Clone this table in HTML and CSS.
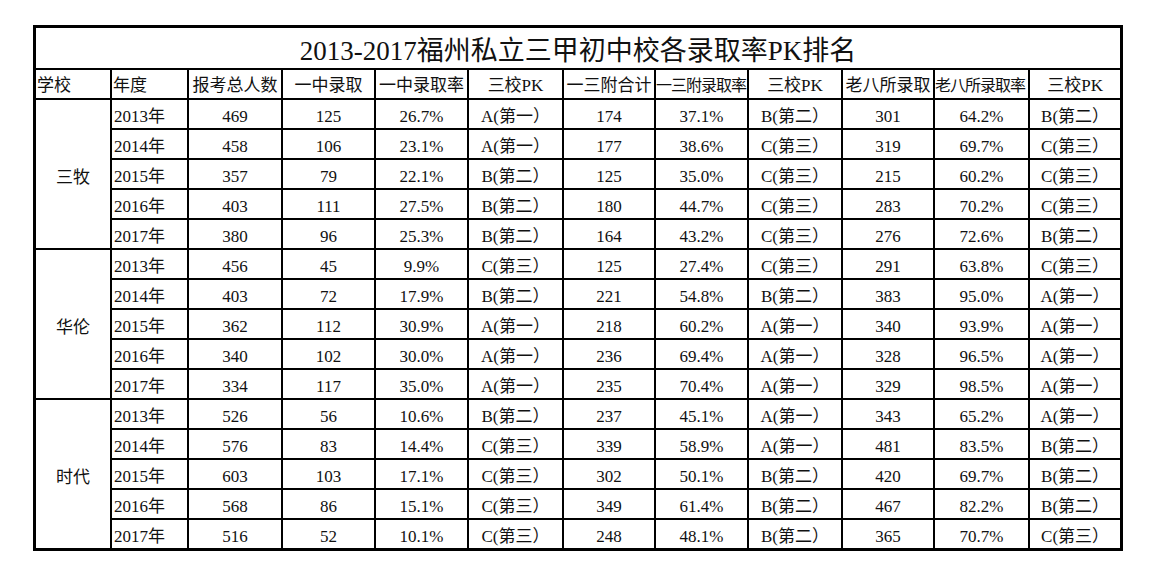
FILE: index.html
```html
<!DOCTYPE html>
<html lang="zh-CN">
<head>
<meta charset="utf-8">
<title>2013-2017福州私立三甲初中校各录取率PK排名</title>
<link rel="stylesheet" href="styles.css">
</head>
<body>
<table class="sheet">
  <colgroup>
    <col class="c1"><col class="c2"><col class="c3"><col class="c4"><col class="c5"><col class="c6">
    <col class="c7"><col class="c8"><col class="c9"><col class="c10"><col class="c11"><col class="c12">
  </colgroup>
  <tbody>
    <tr class="title-row"><td colspan="12" class="title">2013-2017福州私立三甲初中校各录取率PK排名</td></tr>
    <tr class="head-row">
      <td class="left">学校</td><td class="left">年度</td><td>报考总人数</td><td>一中录取</td><td>一中录取率</td><td>三校PK</td>
      <td>一三附合计</td><td class="tight">一三附录取率</td><td>三校PK</td><td>老八所录取</td><td class="tight">老八所录取率</td><td>三校PK</td>
    </tr>
    <tr><td class="school" rowspan="5">三牧</td><td class="left">2013年</td><td>469</td><td>125</td><td>26.7%</td><td>A(第一）</td><td>174</td><td>37.1%</td><td>B(第二）</td><td>301</td><td>64.2%</td><td>B(第二）</td></tr>
    <tr><td class="left">2014年</td><td>458</td><td>106</td><td>23.1%</td><td>A(第一）</td><td>177</td><td>38.6%</td><td>C(第三）</td><td>319</td><td>69.7%</td><td>C(第三）</td></tr>
    <tr><td class="left">2015年</td><td>357</td><td>79</td><td>22.1%</td><td>B(第二）</td><td>125</td><td>35.0%</td><td>C(第三）</td><td>215</td><td>60.2%</td><td>C(第三）</td></tr>
    <tr><td class="left">2016年</td><td>403</td><td>111</td><td>27.5%</td><td>B(第二）</td><td>180</td><td>44.7%</td><td>C(第三）</td><td>283</td><td>70.2%</td><td>C(第三）</td></tr>
    <tr><td class="left">2017年</td><td>380</td><td>96</td><td>25.3%</td><td>B(第二）</td><td>164</td><td>43.2%</td><td>C(第三）</td><td>276</td><td>72.6%</td><td>B(第二）</td></tr>
    <tr><td class="school" rowspan="5">华伦</td><td class="left">2013年</td><td>456</td><td>45</td><td>9.9%</td><td>C(第三）</td><td>125</td><td>27.4%</td><td>C(第三）</td><td>291</td><td>63.8%</td><td>C(第三）</td></tr>
    <tr><td class="left">2014年</td><td>403</td><td>72</td><td>17.9%</td><td>B(第二）</td><td>221</td><td>54.8%</td><td>B(第二）</td><td>383</td><td>95.0%</td><td>A(第一）</td></tr>
    <tr><td class="left">2015年</td><td>362</td><td>112</td><td>30.9%</td><td>A(第一）</td><td>218</td><td>60.2%</td><td>A(第一）</td><td>340</td><td>93.9%</td><td>A(第一）</td></tr>
    <tr><td class="left">2016年</td><td>340</td><td>102</td><td>30.0%</td><td>A(第一）</td><td>236</td><td>69.4%</td><td>A(第一）</td><td>328</td><td>96.5%</td><td>A(第一）</td></tr>
    <tr><td class="left">2017年</td><td>334</td><td>117</td><td>35.0%</td><td>A(第一）</td><td>235</td><td>70.4%</td><td>A(第一）</td><td>329</td><td>98.5%</td><td>A(第一）</td></tr>
    <tr><td class="school" rowspan="5">时代</td><td class="left">2013年</td><td>526</td><td>56</td><td>10.6%</td><td>B(第二）</td><td>237</td><td>45.1%</td><td>A(第一）</td><td>343</td><td>65.2%</td><td>A(第一）</td></tr>
    <tr><td class="left">2014年</td><td>576</td><td>83</td><td>14.4%</td><td>C(第三）</td><td>339</td><td>58.9%</td><td>A(第一）</td><td>481</td><td>83.5%</td><td>B(第二）</td></tr>
    <tr><td class="left">2015年</td><td>603</td><td>103</td><td>17.1%</td><td>C(第三）</td><td>302</td><td>50.1%</td><td>B(第二）</td><td>420</td><td>69.7%</td><td>B(第二）</td></tr>
    <tr><td class="left">2016年</td><td>568</td><td>86</td><td>15.1%</td><td>C(第三）</td><td>349</td><td>61.4%</td><td>B(第二）</td><td>467</td><td>82.2%</td><td>B(第二）</td></tr>
    <tr><td class="left">2017年</td><td>516</td><td>52</td><td>10.1%</td><td>C(第三）</td><td>248</td><td>48.1%</td><td>B(第二）</td><td>365</td><td>70.7%</td><td>C(第三）</td></tr>
  </tbody>
</table>
</body>
</html>
```

FILE: styles.css
```css
html, body {
  margin: 0;
  padding: 0;
  background: #fff;
}

body {
  padding: 25px 0 0 33px;
  font-family: "Liberation Serif", "Noto Sans CJK SC", serif;
  color: #111;
}

.sheet {
  table-layout: fixed;
  border-collapse: separate;
  border-spacing: 0;
  width: 1090px;
  border-top: 3px solid #000;
  border-left: 3px solid #000;
  border-right: 1px solid #000;
  border-bottom: 1px solid #000;
}

.c1 { width: 76px; }
.c2 { width: 77px; }
.c3 { width: 94px; }
.c4 { width: 93px; }
.c5 { width: 93px; }
.c6 { width: 95px; }
.c7 { width: 92px; }
.c8 { width: 93px; }
.c9 { width: 94px; }
.c10 { width: 92px; }
.c11 { width: 95px; }
.c12 { width: 92px; }

.sheet td {
  box-sizing: border-box;
  height: 30px;
  padding: 5px 0 0 0;
  border-right: 2px solid #000;
  border-bottom: 2px solid #000;
  font-size: 17px;
  line-height: 23px;
  text-align: center;
  vertical-align: middle;
  white-space: nowrap;
  overflow: hidden;
}

.sheet td.left {
  text-align: left;
  padding-left: 2px;
}

.head-row td {
  padding-top: 4px;
  line-height: 24px;
}

.head-row td.left {
  padding-left: 1px;
}

.head-row td.tight {
  font-size: 16px;
  letter-spacing: -1px;
  text-align: left;
  padding-left: 0;
}

.title-row td.title {
  height: 42px;
  padding-top: 6px;
  font-size: 27px;
  line-height: 34px;
  color: #111;
}

.sheet td.school {
  text-align: center;
  padding-top: 7px;
  line-height: 28px;
}
```
